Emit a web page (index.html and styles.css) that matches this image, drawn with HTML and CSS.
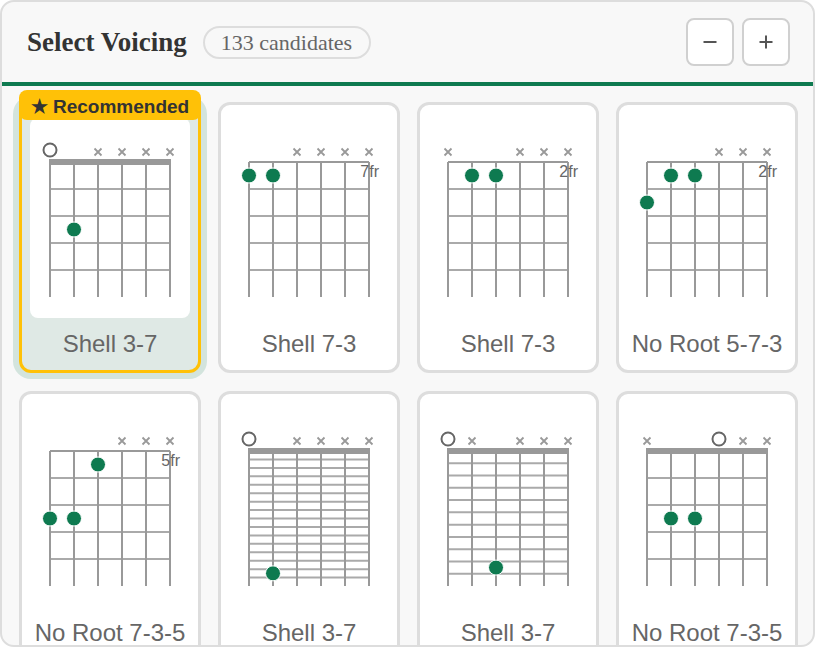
FILE: index.html
```html
<!DOCTYPE html>
<html lang="en">
<head>
    <meta charset="UTF-8">
    <meta name="viewport" content="width=device-width, initial-scale=1.0">
    <title>Select Voicing</title>
    <link rel="stylesheet" href="styles.css">
</head>
<body>
    <div class="panel">
        <div class="panel-header">
            <h2 class="title">Select Voicing</h2>
            <span class="count-pill">133 candidates</span>
            <div class="zoom-buttons">
                <button class="icon-btn" aria-label="Zoom out">
                    <svg width="16" height="16" viewBox="0 0 16 16"><line x1="1.5" y1="8" x2="14.5" y2="8"/></svg>
                </button>
                <button class="icon-btn" aria-label="Zoom in">
                    <svg width="16" height="16" viewBox="0 0 16 16"><line x1="1.5" y1="8" x2="14.5" y2="8"/><line x1="8" y1="1.5" x2="8" y2="14.5"/></svg>
                </button>
            </div>
        </div>

        <div class="voicing-grid" id="voicingGrid">
            <!-- Cards are built below -->
        </div>
    </div>

    <script>
        // marks: 'o' = open string, 'x' = muted, null = nothing above the nut
        // dots: [string, fret] with fret counted from the top of the diagram
        const voicings = [
            { name: 'Shell 3-7', recommended: true, frets: 5, marks: ['o', null, 'x', 'x', 'x', 'x'], dots: [[1, 3]] },
            { name: 'Shell 7-3', position: 7, frets: 5, marks: [null, null, 'x', 'x', 'x', 'x'], dots: [[0, 1], [1, 1]] },
            { name: 'Shell 7-3', position: 2, frets: 5, marks: ['x', null, null, 'x', 'x', 'x'], dots: [[1, 1], [2, 1]] },
            { name: 'No Root 5-7-3', position: 2, frets: 5, marks: [null, null, null, 'x', 'x', 'x'], dots: [[0, 2], [1, 1], [2, 1]] },
            { name: 'No Root 7-3-5', position: 5, frets: 5, marks: [null, null, null, 'x', 'x', 'x'], dots: [[2, 1], [0, 3], [1, 3]] },
            { name: 'Shell 3-7', frets: 16, marks: ['o', null, 'x', 'x', 'x', 'x'], dots: [[1, 15]] },
            { name: 'Shell 3-7', frets: 11, marks: ['o', 'x', null, 'x', 'x', 'x'], dots: [[2, 10]] },
            { name: 'No Root 7-3-5', frets: 5, marks: ['x', null, null, 'o', 'x', 'x'], dots: [[1, 3], [2, 3]] }
        ];

        const LEFT = 20, STEP = 24, TOP = 44, HEIGHT = 135;
        const stringX = i => LEFT + STEP * i;

        function drawDiagram(v) {
            const cell = HEIGHT / v.frets;
            const right = stringX(5);
            let svg = '';

            // top edge: a thick nut in open position, a thin line otherwise
            if (v.position) {
                svg += `<line x1="${LEFT}" y1="${TOP}" x2="${right}" y2="${TOP}" class="string"/>`;
            } else {
                svg += `<rect x="${LEFT - 1}" y="${TOP - 3}" width="${right - LEFT + 2}" height="6" class="nut"/>`;
            }

            for (let k = 1; k < v.frets; k++) {
                const y = TOP + k * cell;
                svg += `<line x1="${LEFT}" y1="${y}" x2="${right}" y2="${y}" class="fret"/>`;
            }

            for (let i = 0; i < 6; i++) {
                svg += `<line x1="${stringX(i)}" y1="${TOP}" x2="${stringX(i)}" y2="${TOP + HEIGHT}" class="string"/>`;
            }

            v.marks.forEach((m, i) => {
                const x = stringX(i);
                if (m === 'o') {
                    svg += `<circle cx="${x}" cy="32" r="6.5" class="open"/>`;
                } else if (m === 'x') {
                    svg += `<path d="M${x - 3.5} 30.5 L${x + 3.5} 37.5 M${x + 3.5} 30.5 L${x - 3.5} 37.5" class="muted"/>`;
                }
            });

            if (v.position) {
                svg += `<text x="${right + 10}" y="59" class="fret-pos">${v.position}fr</text>`;
            }

            v.dots.forEach(([s, f]) => {
                svg += `<circle cx="${stringX(s)}" cy="${TOP + (f - 0.5) * cell}" r="7.5" class="dot"/>`;
            });

            return `<svg class="diagram" width="160" height="200" viewBox="0 0 160 200">${svg}</svg>`;
        }

        const grid = document.getElementById('voicingGrid');
        voicings.forEach(v => {
            const card = document.createElement('div');
            card.className = 'card' + (v.recommended ? ' selected' : '');
            card.innerHTML =
                (v.recommended ? '<div class="badge"><span class="star">★</span>Recommended</div>' : '') +
                drawDiagram(v) +
                `<div class="card-label">${v.name}</div>`;
            grid.appendChild(card);
        });
    </script>
</body>
</html>
```

FILE: styles.css
```css
* {
    margin: 0;
    padding: 0;
    box-sizing: border-box;
}

body {
    font-family: "Liberation Sans", Arial, sans-serif;
    background-color: #fff;
}

.panel {
    width: 815px;
    height: 647px;
    border: 2px solid #ddd;
    border-radius: 14px;
    background-color: #f8f8f8;
    overflow: hidden;
    display: flex;
    flex-direction: column;
}

.panel-header {
    height: 84px;
    flex-shrink: 0;
    display: flex;
    align-items: center;
    gap: 16px;
    padding: 0 23px 0 25px;
    border-bottom: 4px solid #0e7a50;
}

.title {
    font-family: "Liberation Serif", "Times New Roman", serif;
    font-size: 27px;
    font-weight: bold;
    color: #333;
}

.count-pill {
    font-family: "Liberation Serif", "Times New Roman", serif;
    font-size: 22px;
    color: #666;
    height: 33px;
    line-height: 29px;
    padding: 0 17px 0 16px;
    border: 2px solid #ddd;
    border-radius: 999px;
}

.zoom-buttons {
    margin-left: auto;
    display: flex;
    gap: 8px;
}

.icon-btn {
    width: 48px;
    height: 48px;
    background-color: #fff;
    border: 2px solid #d0d0d0;
    border-radius: 8px;
    display: flex;
    align-items: center;
    justify-content: center;
    cursor: pointer;
}

.icon-btn svg line {
    stroke: #555;
    stroke-width: 2;
}

.voicing-grid {
    flex: 1;
    overflow: hidden;
    display: grid;
    grid-template-columns: repeat(4, 182px);
    grid-auto-rows: 271px;
    gap: 18px 17px;
    padding: 16px 16px 0 17px;
}

.card {
    position: relative;
    background-color: #fff;
    border: 3px solid #ddd;
    border-radius: 12px;
    padding: 13px 8px 12px;
    display: flex;
    flex-direction: column;
    align-items: center;
}

.card.selected {
    border-color: #ffc107;
    background-color: #dfe9e5;
    box-shadow: 0 0 0 6px #d3e4dd;
}

.badge {
    position: absolute;
    top: -15px;
    left: -3px;
    right: -3px;
    height: 30px;
    padding: 3px 0 0 12px;
    display: flex;
    align-items: center;
    gap: 5px;
    background-color: #ffc107;
    border-radius: 8px;
    font-size: 19px;
    font-weight: bold;
    color: #333;
}

.diagram {
    display: block;
    background-color: #fff;
    border-radius: 8px;
}

.card-label {
    margin-top: 12px;
    font-size: 24px;
    line-height: 28px;
    color: #666;
    white-space: nowrap;
}

/* chord diagram parts */
.string {
    stroke: #999;
    stroke-width: 2;
}

.fret {
    stroke: #aaa;
    stroke-width: 2;
}

.nut {
    fill: #999;
}

.open {
    fill: none;
    stroke: #666;
    stroke-width: 2;
}

.muted {
    stroke: #999;
    stroke-width: 1.8;
    fill: none;
}

.fret-pos {
    font-family: "Liberation Sans", Arial, sans-serif;
    font-size: 16px;
    fill: #666;
    text-anchor: end;
}

.dot {
    fill: #0e7a50;
    stroke: #fff;
    stroke-width: 1;
}
```
